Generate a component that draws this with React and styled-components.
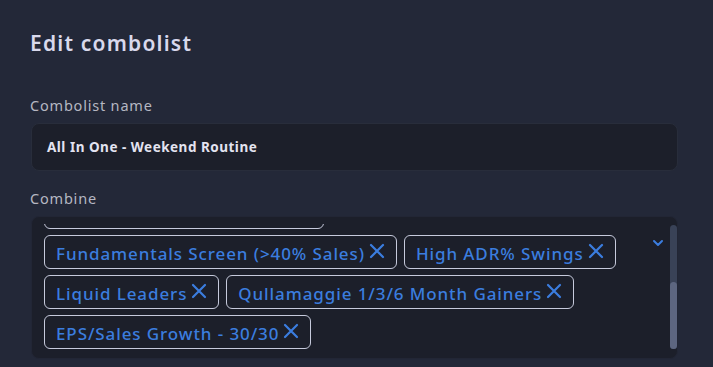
import { useLayoutEffect, useRef } from 'react';
import styled, { createGlobalStyle } from 'styled-components';

const GlobalStyle = createGlobalStyle`
  html, body {
    margin: 0;
    padding: 0;
    background: #232838;
  }
  body {
    font-family: 'Noto Sans', 'Open Sans', sans-serif;
  }
`;

const Panel = styled.div`
  width: 713px;
  height: 367px;
  box-sizing: border-box;
  padding: 29px 35px 0 30px;
  overflow: hidden;
  background: #232838;
`;

const Title = styled.h2`
  margin: 0 0 39px;
  font-size: 21px;
  font-weight: 600;
  letter-spacing: 1.2px;
  color: #d9d9ec;
  line-height: 28px;
`;

const Field = styled.div`
  display: flex;
  flex-direction: column;
  margin-bottom: 18px;
`;

const Label = styled.label`
  font-size: 14.5px;
  letter-spacing: 0.8px;
  color: #b5b7c2;
  line-height: 18px;
  margin-bottom: 9px;
`;

const Input = styled.div`
  height: 48px;
  box-sizing: border-box;
  margin-left: 1px;
  display: flex;
  align-items: center;
  padding: 0 15px;
  background: #1c1f2a;
  border: 1px solid #282d3b;
  border-radius: 8px;
  color: #e3e3f0;
  font-size: 13.5px;
  font-weight: 700;
  letter-spacing: 0.5px;
`;

const Combo = styled.div`
  height: 143px;
  margin-left: 1px;
  box-sizing: border-box;
  display: flex;
  padding: 7px 0;
  background: #1c1f2a;
  border: 1px solid #222635;
  border-radius: 8px;
`;

const ChipViewport = styled.div`
  flex: 1;
  overflow: hidden;
  padding: 0 12px;
`;

const ChipList = styled.div`
  display: flex;
  flex-wrap: wrap;
  gap: 6px 7px;
  padding: 4px 0 2px;
`;

const Chip = styled.span`
  display: inline-flex;
  align-items: center;
  height: 34px;
  box-sizing: border-box;
  padding: 2px 10px 0 11px;
  border: 1px solid #c6cadc;
  border-radius: 6px;
  color: #3b7ddf;
  font-size: 17px;
  font-weight: 500;
  letter-spacing: 0.9px;
  white-space: nowrap;
`;

const Remove = styled.svg`
  width: 18px;
  height: 18px;
  margin-left: 3px;
  margin-top: -4px;
  flex: none;
`;

const Side = styled.div`
  display: flex;
  padding: 1px 0 2px 0;
  gap: 6px;
`;

const Chevron = styled.svg`
  width: 12px;
  height: 8px;
  margin-top: 14px;
`;

const Track = styled.div`
  width: 7px;
  border-radius: 4px;
  background: #394257;
  display: flex;
  flex-direction: column;
  justify-content: flex-end;
`;

const Thumb = styled.div`
  height: 67px;
  border-radius: 4px;
  background: #5d6680;
`;

const chips = [
  'Episodic Pivots',
  'Top Volume Movers',
  'Stage 2 Uptrend Leaders (Weekly)',
  'Power Earnings Gap Setup',
  'Fundamentals Screen (>40% Sales)',
  'High ADR% Swings',
  'Liquid Leaders',
  'Qullamaggie 1/3/6 Month Gainers',
  'EPS/Sales Growth - 30/30',
];

const XIcon = () => (
  <Remove viewBox="0 0 18 18" fill="none">
    <path d="M3 3L15 15M15 3L3 15" stroke="#3b7ddf" strokeWidth="2.2" strokeLinecap="round" />
  </Remove>
);

const App = () => {
  const viewport = useRef(null);

  useLayoutEffect(() => {
    const el = viewport.current;
    if (el) el.scrollTop = el.scrollHeight;
  }, []);

  return (
    <>
      <GlobalStyle />
      <Panel>
        <Title>Edit combolist</Title>
        <Field>
          <Label>Combolist name</Label>
          <Input>All In One - Weekend Routine</Input>
        </Field>
        <Field>
          <Label>Combine</Label>
          <Combo>
            <ChipViewport ref={viewport}>
              <ChipList>
                {chips.map((c) => (
                  <Chip key={c}>
                    {c}
                    <XIcon />
                  </Chip>
                ))}
              </ChipList>
            </ChipViewport>
            <Side>
              <Chevron viewBox="0 0 12 8" fill="none">
                <path d="M2 2L6 6L10 2" stroke="#3b7ddf" strokeWidth="2" strokeLinecap="round" strokeLinejoin="round" />
              </Chevron>
              <Track>
                <Thumb />
              </Track>
            </Side>
          </Combo>
        </Field>
      </Panel>
    </>
  );
};

export default App;
